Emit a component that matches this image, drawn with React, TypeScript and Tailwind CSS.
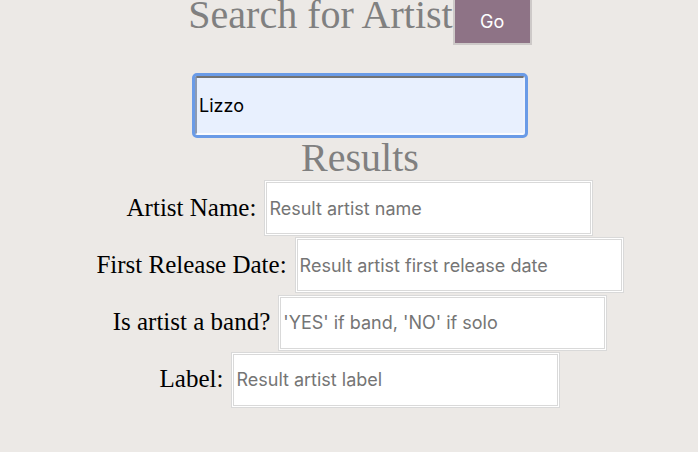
import React from 'react';

const serif = "font-['Liberation_Serif','Times_New_Roman',serif]";
const sans = "font-['Inter','Liberation_Sans',sans-serif]";

const rows = [
  { label: 'Artist Name:', placeholder: 'Result artist name' },
  { label: 'First Release Date:', placeholder: 'Result artist first release date' },
  { label: 'Is artist a band?', placeholder: "'YES' if band, 'NO' if solo" },
  { label: 'Label:', placeholder: 'Result artist label' },
];

export default function App() {
  return (
    <div className="min-h-screen overflow-hidden bg-[#ece9e6] pl-[22px] flex flex-col items-center">
      {/* Search header */}
      <div className="flex items-start -mt-[2px]">
        <h1 className={`${serif} text-[40px] leading-[46px] text-[#808080] -mt-[6px]`}>
          Search for Artist
        </h1>
        <button className={`${sans} w-[79px] h-[47px] bg-[#8e7386] border-2 border-[#cdc9c8] text-white text-[18px]`}>
          Go
        </button>
      </div>

      {/* Search input */}
      <input
        type="text"
        defaultValue="Lizzo"
        className={`${sans} mt-[31px] w-[330px] h-[59px] bg-[#e8f0fe] text-black text-[18px] px-[2px] rounded-[2px] border-2 border-t-[#737373] border-l-[#8d9bb3] border-r-[#eef3fd] border-b-[#fbfcff] outline-[3px] outline-solid outline-[#6a9be7]`}
      />

      {/* Results */}
      <h2 className={`${serif} text-[40px] leading-[46px] text-[#808080]`}>Results</h2>

      <div className="flex flex-col gap-[1.3px] -mt-[1px]">
        {rows.map((row) => (
          <div key={row.label} className="flex justify-center items-baseline gap-[8px]">
            <span className={`${serif} text-[25px] text-black translate-y-[1px]`}>{row.label}</span>
            <input
              type="text"
              placeholder={row.placeholder}
              className={`${sans} w-[329px] h-[56px] bg-white px-[2px] text-[18px] border-[3px] border-double border-[#d9d9d9] placeholder:text-[#757575] outline-none`}
            />
          </div>
        ))}
      </div>
    </div>
  );
}
